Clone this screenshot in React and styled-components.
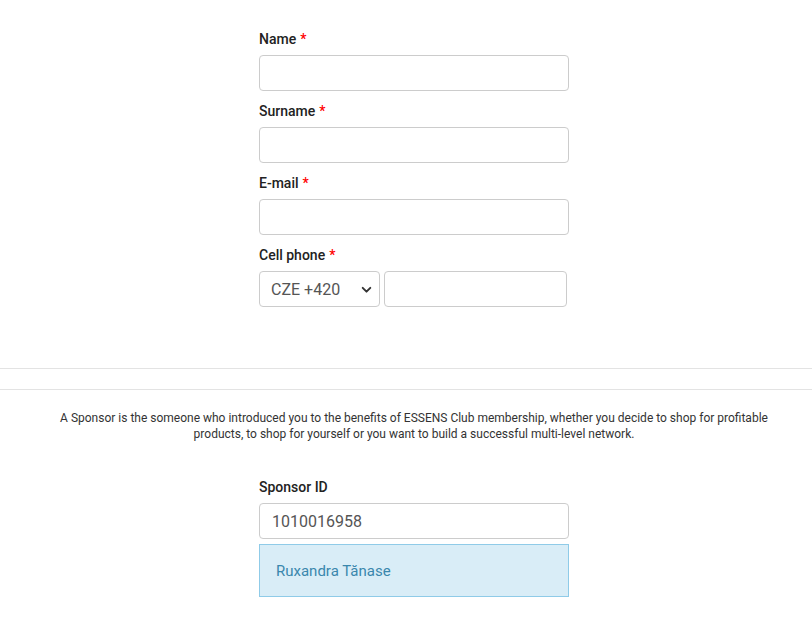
import React from "react";
import styled, { createGlobalStyle } from "styled-components";

const Global = createGlobalStyle`
  html, body { margin: 0; padding: 0; background: #fff; }
  body { font-family: Roboto, "Liberation Sans", Arial, sans-serif; color: #333; }
  * { box-sizing: border-box; }
`;

const Page = styled.div`
  width: 812px;
  padding-top: 29px;
`;

const Column = styled.div`
  display: flex;
  justify-content: center;
  padding-left: 16px;
`;

const Form = styled.div`
  width: 310px;
  display: flex;
  flex-direction: column;
`;

const Group = styled.div`
  display: flex;
  flex-direction: column;
  margin-bottom: ${(p) => p.$mb ?? 10}px;
`;

const Label = styled.label`
  font-size: 14px;
  font-weight: 500;
  line-height: 20px;
  color: #222;
  margin-bottom: 6px;
`;

const Star = styled.span`
  color: #f00;
  margin-left: 4px;
`;

const Input = styled.input`
  height: 36px;
  width: ${(p) => (p.$w ? p.$w + "px" : "100%")};
  border: 1px solid #ccc;
  border-radius: 4px;
  padding: 0 12px;
  font-family: Roboto, "Liberation Sans", Arial, sans-serif;
  font-size: 16px;
  color: #555;
  outline: none;
  background: #fff;
`;

const PhoneRow = styled.div`
  display: flex;
  gap: 4px;
`;

const SelectBox = styled.div`
  position: relative;
  width: 121px;
  height: 36px;
  border: 1px solid #ccc;
  border-radius: 4px;
  display: flex;
  align-items: center;
  justify-content: space-between;
  padding: 0 6px 0 11px;
  font-size: 16px;
  color: #555;
`;

const Divider = styled.hr`
  border: 0;
  border-top: 1px solid #e3e3e3;
  margin: 0;
  width: 100%;
`;

const Dividers = styled.div`
  display: flex;
  flex-direction: column;
  gap: 20px;
  margin-top: 61px;
`;

const Note = styled.p`
  font-size: 12px;
  line-height: 16px;
  color: #333;
  text-align: center;
  margin: 20px 0 35px;
  padding: 0 26px 0 42px;
`;

const Alert = styled.div`
  margin-top: 5px;
  height: 53px;
  background: #d9edf7;
  border: 1px solid #8fcbe8;
  color: #3a87ad;
  font-size: 15px;
  display: flex;
  align-items: center;
  padding: 0 16px;
`;

const Chevron = () => (
  <svg width="13" height="13" viewBox="0 0 12 12">
    <path d="M2.5 4.5 L6 8 L9.5 4.5" fill="none" stroke="#333" strokeWidth="1.8" strokeLinecap="round" strokeLinejoin="round" />
  </svg>
);

const Field = ({ label }) => (
  <Group>
    <Label>
      {label}
      <Star>*</Star>
    </Label>
    <Input type="text" />
  </Group>
);

export default function App() {
  return (
    <Page>
      <Global />
      <Column>
        <Form>
          <Field label="Name" />
          <Field label="Surname" />
          <Field label="E-mail" />
          <Group $mb={0}>
            <Label>
              Cell phone<Star>*</Star>
            </Label>
            <PhoneRow>
              <SelectBox>
                <span>CZE +420</span>
                <Chevron />
              </SelectBox>
              <Input type="text" $w={183} />
            </PhoneRow>
          </Group>
        </Form>
      </Column>
      <Dividers>
        <Divider />
        <Divider />
      </Dividers>
      <Note>
        A Sponsor is the someone who introduced you to the benefits of ESSENS Club membership, whether you decide to shop for profitable
        products, to shop for yourself or you want to build a successful multi-level network.
      </Note>
      <Column>
        <Form>
          <Group $mb={0}>
            <Label>Sponsor ID</Label>
            <Input type="text" defaultValue="1010016958" />
            <Alert>Ruxandra Tănase</Alert>
          </Group>
        </Form>
      </Column>
    </Page>
  );
}
